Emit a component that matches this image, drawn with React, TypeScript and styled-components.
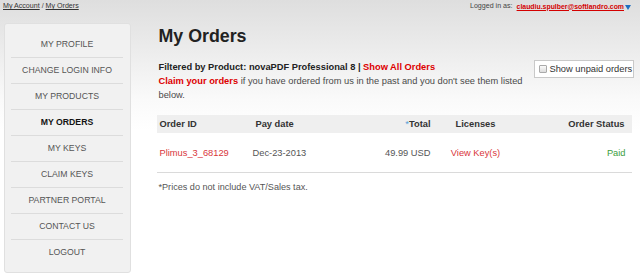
import React from "react";
import styled, { createGlobalStyle } from "styled-components";

const Global = createGlobalStyle`
  html, body { margin: 0; padding: 0; }
  body {
    width: 640px;
    height: 275px;
    overflow: hidden;
    font-family: "Liberation Sans", Arial, sans-serif;
    color: #444;
    background: linear-gradient(to bottom, #dedede 0px, #ececec 50px, #fafafa 100px, #ffffff 130px);
  }
`;

const Page = styled.div`
  width: 640px;
  height: 275px;
  display: flex;
  flex-direction: column;
`;

const TopBar = styled.div`
  height: 12px;
  padding: 0 9px 0 3px;
  display: flex;
  justify-content: space-between;
  align-items: center;
  font-size: 7.1px;
  color: #444;
`;

const Crumb = styled.a`
  color: #333;
  text-decoration: underline;
`;

const Login = styled.div`
  display: flex;
  align-items: center;
  gap: 4px;
`;

const Email = styled.a`
  color: #d40000;
  font-weight: bold;
  font-size: 6.9px;
  text-decoration: underline;
`;

const Caret = styled.span`
  display: inline-block;
  width: 0;
  height: 0;
  border-left: 3.5px solid transparent;
  border-right: 3.5px solid transparent;
  border-top: 5px solid #1f6fc0;
  margin-left: -3px;
  margin-top: 2px;
`;

const Body = styled.div`
  display: flex;
  padding-top: 11px;
`;

const Sidebar = styled.nav`
  margin-left: 3.5px;
  width: 127px;
  height: 250px;
  box-sizing: border-box;
  padding: 7px 6.5px;
  background: #f1f1f1;
  border: 1px solid #e0e0e0;
  border-radius: 3px;
  display: flex;
  flex-direction: column;
`;

const NavItem = styled.a<{ $active?: boolean; $first?: boolean }>`
  height: 26.3px;
  box-sizing: border-box;
  display: flex;
  align-items: center;
  justify-content: center;
  font-size: 8.7px;
  text-transform: uppercase;
  color: ${(p) => (p.$active ? "#111" : "#555")};
  font-weight: ${(p) => (p.$active ? "bold" : "normal")};
  border-top: ${(p) => (p.$first ? "none" : "1px solid #dcdcdc")};
`;

const Main = styled.main`
  margin-left: 26px;
  width: 477px;
  display: flex;
  flex-direction: column;
`;

const Title = styled.h1`
  margin: 3px 0 0 2px;
  font-size: 17.8px;
  line-height: 21px;
  font-weight: bold;
  color: #222;
`;

const Intro = styled.div`
  margin-top: 13px;
  padding-left: 2px;
  font-size: 9.3px;
  line-height: 14px;
  color: #4a4a4a;
`;

const Strong = styled.b`
  color: #222;
`;

const RedLink = styled.a`
  color: #dd0000;
  font-weight: bold;
  text-decoration: none;
`;

const UnpaidBox = styled.label`
  float: right;
  margin: 0;
  width: 100px;
  height: 18px;
  box-sizing: border-box;
  border: 1px solid #c9c9c9;
  background: #fff;
  display: flex;
  align-items: center;
  gap: 3px;
  padding-left: 4px;
  font-size: 9.3px;
  color: #333;
`;

const Check = styled.span`
  width: 8px;
  height: 8px;
  box-sizing: border-box;
  border: 1px solid #aaa;
  border-radius: 1px;
  background: linear-gradient(#fafafa, #dcdcdc);
`;

const Table = styled.div`
  margin-top: 13px;
  width: 475px;
  display: flex;
  flex-direction: column;
`;

const Row = styled.div<{ $head?: boolean }>`
  display: grid;
  grid-template-columns: 96px 100px 82px 82px 1fr;
  align-items: center;
  height: ${(p) => (p.$head ? "18px" : "39px")};
  background: ${(p) => (p.$head ? "#efefef" : "transparent")};
  border-bottom: ${(p) => (p.$head ? "none" : "1px solid #dadada")};
  font-size: 9.3px;
  font-weight: ${(p) => (p.$head ? "bold" : "normal")};
  color: ${(p) => (p.$head ? "#333" : "#555")};
`;

const Cell = styled.div<{ $align?: "left" | "right" | "center"; $pl?: number; $pr?: number; $color?: string }>`
  text-align: ${(p) => p.$align || "left"};
  padding-left: ${(p) => p.$pl ?? 0}px;
  padding-right: ${(p) => p.$pr ?? 0}px;
  color: ${(p) => p.$color || "inherit"};
  white-space: nowrap;
`;

const Star = styled.span`
  color: #5aa0d8;
  font-weight: normal;
`;

const Note = styled.div`
  margin-top: 9px;
  margin-left: 2px;
  font-size: 9.1px;
  color: #555;
`;

const navItems = [
  "My Profile",
  "Change Login Info",
  "My Products",
  "My Orders",
  "My Keys",
  "Claim Keys",
  "Partner Portal",
  "Contact Us",
  "Logout",
];

export default function App() {
  return (
    <Page>
      <Global />
      <TopBar>
        <div>
          <Crumb>My Account</Crumb> / <Crumb>My Orders</Crumb>
        </div>
        <Login>
          <span>Logged in as:</span>
          <Email>claudiu.spulber@softlandro.com</Email>
          <Caret />
        </Login>
      </TopBar>
      <Body>
        <Sidebar>
          {navItems.map((n, i) => (
            <NavItem key={n} $first={i === 0} $active={n === "My Orders"}>
              {n}
            </NavItem>
          ))}
        </Sidebar>
        <Main>
          <Title>My Orders</Title>
          <Intro>
            <UnpaidBox>
              <Check />
              Show unpaid orders
            </UnpaidBox>
            <Strong>Filtered by Product: novaPDF Professional 8 | </Strong>
            <RedLink>Show All Orders</RedLink>
            <br />
            <RedLink>Claim your orders</RedLink> if you have ordered from us in the past and you don't see them listed below.
          </Intro>
          <Table>
            <Row $head>
              <Cell $pl={3}>Order ID</Cell>
              <Cell $pl={3}>Pay date</Cell>
              <Cell $align="right" $pr={4}>
                <Star>*</Star>Total
              </Cell>
              <Cell $align="center">Licenses</Cell>
              <Cell $align="right" $pr={7}>Order Status</Cell>
            </Row>
            <Row>
              <Cell $pl={3} $color="#d9353b">Plimus_3_68129</Cell>
              <Cell>Dec-23-2013</Cell>
              <Cell $align="right" $pr={4}>49.99 USD</Cell>
              <Cell $align="center" $color="#d9353b">View Key(s)</Cell>
              <Cell $align="right" $pr={6} $color="#3c9e3c">Paid</Cell>
            </Row>
          </Table>
          <Note>*Prices do not include VAT/Sales tax.</Note>
        </Main>
      </Body>
    </Page>
  );
}
